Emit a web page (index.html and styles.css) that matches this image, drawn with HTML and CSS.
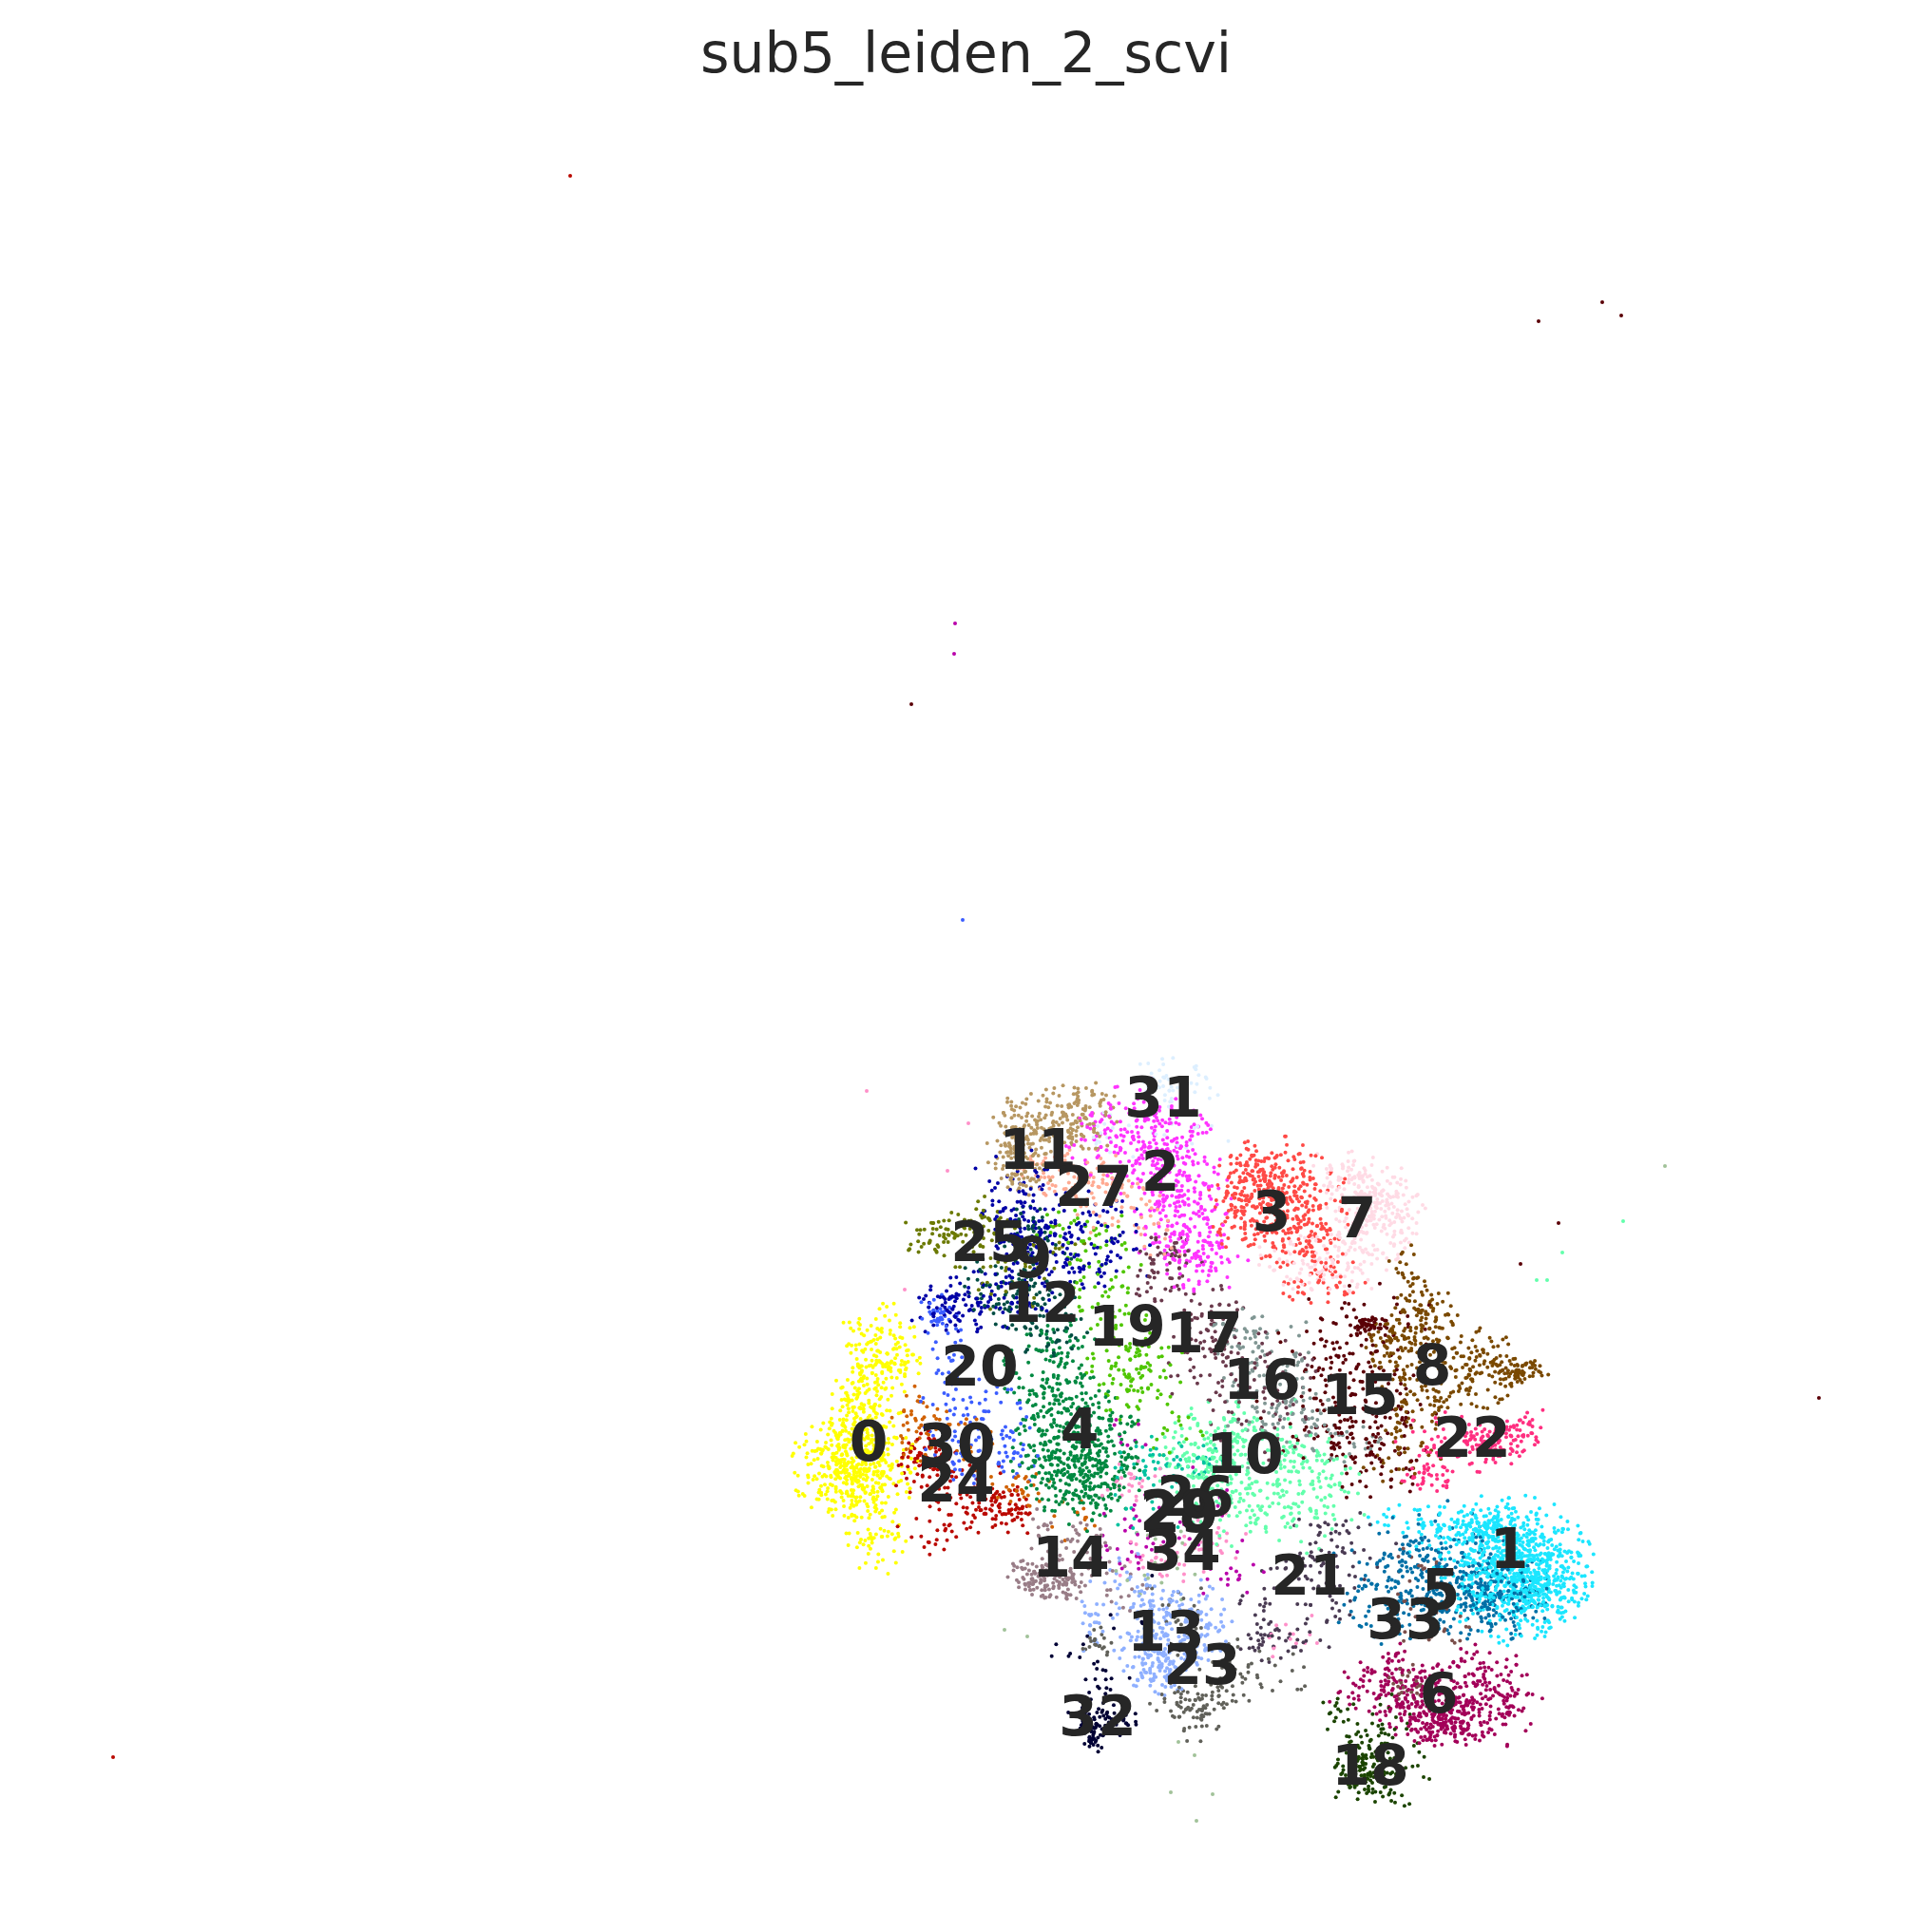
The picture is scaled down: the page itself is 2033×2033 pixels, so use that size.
FILE: index.html
```html
<!DOCTYPE html>
<html lang="en">
<head>
<meta charset="utf-8">
<title>sub5_leiden_2_scvi</title>
<link rel="stylesheet" href="styles.css">
</head>
<body>
<main class="figure">
  <h1 class="figure-title">sub5_leiden_2_scvi</h1>
  <canvas id="scatter" class="scatter" width="2033" height="2033"></canvas>
  <div id="labels" class="labels"></div>
</main>
<script src="script.js"></script>
</body>
</html>
```
FILE: styles.css
```css
html, body {
  margin: 0;
  padding: 0;
  background: #ffffff;
}
.figure {
  position: relative;
  width: 2033px;
  height: 2033px;
  overflow: hidden;
  background: #ffffff;
  color: #262626;
  font-family: "DejaVu Sans", sans-serif;
}
.figure-title {
  margin: 0;
  padding-top: 21px;
  font-size: 58.5px;
  font-weight: 400;
  line-height: 70px;
  text-align: center;
  position: relative;
  z-index: 2;
}
.scatter {
  position: absolute;
  left: 0;
  top: 0;
}
.labels {
  position: absolute;
  inset: 0;
}
.cluster-label {
  position: absolute;
  transform: translate(-50%, -50%);
  font-size: 58.5px;
  font-weight: 700;
  line-height: 1;
  white-space: nowrap;
}
```
FILE: script.js
```js
(function () {
  var seed = 20240611;
  function rnd() {
    seed |= 0; seed = (seed + 0x6d2b79f5) | 0;
    var t = Math.imul(seed ^ (seed >>> 15), 1 | seed);
    t = (t + Math.imul(t ^ (t >>> 7), 61 | t)) ^ t;
    return ((t ^ (t >>> 14)) >>> 0) / 4294967296;
  }
  function gauss() {
    var u = 1 - rnd(), v = rnd();
    return Math.sqrt(-2 * Math.log(u)) * Math.cos(2 * Math.PI * v);
  }
  // A 2-D normal draw kept inside a round limit, so that blobs stay round.
  function clippedPair() {
    var a, b;
    do { a = gauss(); b = gauss(); } while (a * a + b * b > 5.3);
    return [a, b];
  }

  // cluster id -> colour, label centre, blobs [cx, cy, sx, sy, n]
  var clusters = [
    ["#FFFF00", 914, 1517, [[898,1545,26,23,430],[925,1430,18,25,160],[905,1490,17,24,150],[925,1620,14,16,50]]],
    ["#1CE6FF", 1588, 1630, [[1592,1650,33,31,640],[1616,1662,23,21,220],[1570,1610,18,10,90],[1510,1605,28,12,70]]],
    ["#FF34FF", 1221, 1233, [[1200,1195,30,25,220],[1240,1265,22,34,230],[1268,1322,18,18,80]]],
    ["#FF4A46", 1338, 1275, [[1340,1238,20,17,140],[1320,1280,20,17,100],[1370,1300,22,20,130],[1390,1345,20,14,40],[1380,1265,18,22,60],[1305,1250,14,20,50]]],
    ["#008941", 1136, 1504, [[1110,1445,22,25,130],[1135,1525,28,28,400],[1150,1565,20,18,70]]],
    ["#006FA6", 1516, 1673, [[1565,1680,30,20,260],[1470,1670,30,25,120],[1510,1640,25,25,60],[1540,1650,30,25,50]]],
    ["#A30059", 1514, 1782, [[1515,1810,22,13,190],[1565,1785,22,22,170],[1460,1775,25,18,130],[1500,1770,30,15,50]]],
    ["#FFDBE5", 1428, 1282, [[1450,1270,20,20,210],[1415,1240,15,15,60],[1400,1325,30,15,130]]],
    ["#7A4900", 1507, 1437, [[1470,1415,13,12,80],[1500,1385,15,18,90],[1485,1340,10,12,20],[1545,1430,22,14,90],[1595,1443,14,7,70],[1490,1475,15,20,70],[1540,1470,25,10,30],[1470,1525,20,15,30]]],
    ["#0000A6", 1087, 1324, [[1110,1310,32,24,140],[1000,1375,20,12,70],[1050,1365,25,15,60],[1070,1245,20,15,40],[1075,1290,18,15,50],[1165,1300,25,25,35]]],
    ["#63FFAC", 1310, 1530, [[1270,1530,28,22,120],[1320,1540,38,28,200],[1370,1575,28,25,90],[1310,1595,28,15,50]]],
    ["#B79762", 1092, 1210, [[1115,1180,28,16,150],[1070,1205,15,18,110],[1075,1240,15,8,25],[1145,1155,12,10,25]]],
    ["#004D43", 1096, 1371, [[1075,1350,25,25,110],[1100,1400,18,12,40],[1085,1290,12,15,30],[1040,1365,12,8,15]]],
    ["#8FB0FF", 1227, 1717, [[1220,1750,16,15,130],[1225,1700,25,18,120],[1265,1710,12,20,50],[1150,1710,12,15,25],[1190,1660,20,10,20]]],
    ["#997D87", 1127, 1639, [[1085,1655,14,10,70],[1115,1665,15,10,70],[1135,1630,18,15,40],[1100,1610,10,10,10],[1175,1680,15,15,15]]],
    ["#5A0007", 1431, 1468, [[1442,1395,8,6,45],[1435,1400,35,25,60],[1400,1445,30,18,40],[1440,1480,30,20,60],[1450,1530,30,20,70],[1400,1505,15,10,15],[1400,1490,35,30,40]]],
    ["#809693", 1328, 1452, [[1310,1405,15,12,40],[1340,1445,25,25,50],[1375,1490,22,15,50],[1415,1510,20,12,20],[1330,1490,25,30,30]]],
    ["#6A3A4C", 1267, 1403, [[1230,1320,15,10,40],[1220,1350,12,12,25],[1270,1400,18,25,70],[1330,1430,25,15,30],[1350,1500,15,15,20],[1300,1470,30,30,40]]],
    ["#1B4400", 1442, 1858, [[1435,1865,12,10,45],[1450,1862,22,18,130],[1445,1820,20,16,30],[1405,1800,9,8,12]]],
    ["#4FC601", 1186, 1396, [[1195,1440,20,22,100],[1150,1340,20,22,50],[1140,1290,20,12,30],[1170,1400,15,15,20],[1243,1507,15,15,15]]],
    ["#3B5DFF", 1031, 1438, [[985,1385,10,10,40],[1025,1510,25,25,110],[1000,1440,15,20,30],[1070,1530,14,12,20]]],
    ["#4A3B53", 1378, 1658, [[1335,1725,16,10,40],[1370,1660,20,15,30],[1400,1620,20,15,30],[1390,1700,15,15,20],[1330,1690,10,10,10],[1420,1640,20,25,25]]],
    ["#FF2F80", 1549, 1513, [[1575,1515,18,11,110],[1605,1495,8,10,15],[1520,1525,20,15,60],[1500,1555,18,10,30]]],
    ["#61615A", 1265, 1752, [[1255,1795,18,15,80],[1300,1760,20,15,40],[1155,1730,8,7,20],[1240,1700,15,25,25],[1350,1765,15,10,10]]],
    ["#BA0900", 1006, 1560, [[975,1540,15,15,70],[1015,1575,25,15,60],[1055,1590,18,12,70],[985,1615,20,10,20]]],
    ["#6B7900", 1041, 1307, [[995,1300,18,11,65],[1040,1285,15,12,30],[1060,1340,22,15,30],[1110,1310,15,10,15]]],
    ["#00C2A0", 1258, 1575, [[1215,1550,20,15,45],[1262,1545,16,12,25],[1210,1600,20,8,15]]],
    ["#FFAA92", 1151, 1249, [[1130,1235,25,12,70],[1165,1260,22,15,60],[1215,1300,15,15,20]]],
    ["#FF90C9", 1240, 1590, [[1190,1560,15,10,25],[1230,1640,25,12,35],[1350,1720,15,15,15],[1280,1620,15,15,20]]],
    ["#B903AA", 1242, 1592, [[1200,1620,20,22,40],[1260,1600,20,30,25],[1290,1650,20,12,15],[1180,1510,12,8,8]]],
    ["#D16100", 1007, 1520, [[965,1500,12,18,50],[1010,1520,15,15,20],[1075,1565,15,10,25],[1130,1600,15,10,12]]],
    ["#DDEFFF", 1224, 1155, [[1235,1145,20,15,50],[1165,1190,15,15,15],[1230,1190,25,15,15]]],
    ["#000035", 1155, 1806, [[1150,1826,6,7,40],[1155,1810,13,10,40],[1160,1775,10,14,18],[1180,1810,8,6,12],[1130,1735,10,10,7],[1190,1700,10,30,6]]],
    ["#7B4F4B", 1479, 1704, [[1480,1775,10,10,25],[1495,1690,15,20,20],[1490,1645,12,8,10],[1530,1720,10,10,8]]],
    ["#A1C299", 1244, 1632, [[1215,1650,20,20,20]]]
  ];

  // isolated cells far from the main mass: [x, y, cluster]
  var outliers = [
    [600,185,24],[119,1849,24],[1619,338,15],[1686,318,15],[1706,332,15],
    [1005,656,29],[1004,688,29],[959,741,15],[1013,968,20],[912,1148,28],
    [1019,1182,28],[997,1232,28],[952,1357,28],[1752,1227,34],[1640,1287,15],
    [1708,1285,10],[1644,1318,10],[1628,1347,10],[1617,1347,10],[1600,1330,15],
    [1914,1471,15],[1057,1715,34],[1081,1722,34],[1240,1833,34],[1232,1886,34],
    [1257,1847,34],[1276,1888,34],[1259,1916,34]
  ];

  var points = [];
  clusters.forEach(function (c, id) {
    c[3].forEach(function (b) {
      for (var i = 0; i < b[4]; i++) {
        var g = clippedPair();
        points.push([b[0] + g[0] * b[2] * 1.15, b[1] + g[1] * b[3] * 1.15, id]);
      }
    });
  });
  outliers.forEach(function (o) { points.push(o); });

  for (var i = points.length - 1; i > 0; i--) {
    var j = Math.floor(rnd() * (i + 1));
    var tmp = points[i]; points[i] = points[j]; points[j] = tmp;
  }

  var ctx = document.getElementById("scatter").getContext("2d");
  points.forEach(function (p) {
    ctx.fillStyle = clusters[p[2]][0];
    ctx.beginPath();
    ctx.arc(p[0], p[1], 2, 0, Math.PI * 2);
    ctx.fill();
  });

  var layer = document.getElementById("labels");
  clusters.forEach(function (c, id) {
    var el = document.createElement("span");
    el.className = "cluster-label";
    el.textContent = String(id);
    el.style.left = c[1] + "px";
    el.style.top = c[2] + "px";
    layer.appendChild(el);
  });
})();
```
